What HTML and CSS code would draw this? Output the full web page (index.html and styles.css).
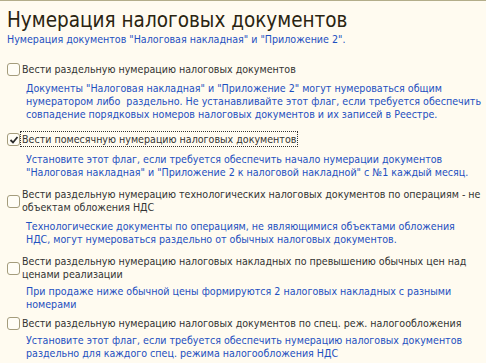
FILE: index.html
```html
<!DOCTYPE html>
<html lang="ru">
<head>
<meta charset="utf-8">
<title>Нумерация налоговых документов</title>
<link rel="stylesheet" href="styles.css">
</head>
<body>
<div class="page">
  <h1 class="title">Нумерация налоговых документов</h1>
  <div class="subtitle">Нумерация документов "Налоговая накладная" и "Приложение 2".</div>

  <div class="option opt1">
    <span class="box"></span>
    <span class="label">Вести раздельную нумерацию налоговых документов</span>
    <div class="desc">Документы "Налоговая накладная" и "Приложение 2" могут нумероваться общим<br>нумератором либо&nbsp; раздельно. Не устанавливайте этот флаг, если требуется обеспечить<br>совпадение порядковых номеров налоговых документов и их записей в Реестре.</div>
  </div>

  <div class="option opt2">
    <span class="box checked"><svg viewBox="0 0 10 10" width="10" height="10"><path d="M1.5 5 L4 7.5 L8.5 2" fill="none" stroke="#2a2a2a" stroke-width="1.8"/></svg></span>
    <span class="label"><span class="focus">Вести помесячную нумерацию налоговых документов</span></span>
    <div class="desc">Установите этот флаг, если требуется обеспечить начало нумерации документов<br>"Налоговая накладная" и "Приложение 2 к налоговой накладной" с №1 каждый месяц.</div>
  </div>

  <div class="option opt3">
    <span class="box"></span>
    <span class="label">Вести раздельную нумерацию технологических налоговых документов по операциям - не<br>объектам обложения НДС</span>
    <div class="desc">Технологические документы по операциям, не являющимися объектами обложения<br>НДС, могут нумероваться раздельно от обычных налоговых документов.</div>
  </div>

  <div class="option opt4">
    <span class="box"></span>
    <span class="label">Вести раздельную нумерацию налоговых накладных по превышению обычных цен над<br>ценами реализации</span>
    <div class="desc">При продаже ниже обычной цены формируются 2 налоговых накладных с разными<br>номерами</div>
  </div>

  <div class="option opt5">
    <span class="box"></span>
    <span class="label">Вести раздельную нумерацию налоговых документов по спец. реж. налогообложения</span>
    <div class="desc">Установите этот флаг, если требуется обеспечить нумерацию налоговых документов<br>раздельно для каждого спец. режима налогообложения НДС</div>
  </div>
</div>
</body>
</html>
```

FILE: styles.css
```css
html, body {
  margin: 0;
  padding: 0;
  background: #fffbf0;
}
body {
  border-top: 1px solid #b3ad8a;
  font-family: "DejaVu Sans", sans-serif;
  font-stretch: condensed;
  font-size: 10.6px;
  color: #333333;
  overflow: hidden;
}
.page {
  padding: 7px 4px 0 7px;
}
.title {
  margin: 0;
  font-weight: normal;
  font-size: 20.5px;
  line-height: 24px;
  color: #2a2410;
}
.subtitle {
  color: #1e50c0;
  line-height: 14px;
  margin-bottom: 17px;
  white-space: nowrap;
}
.option {
  display: grid;
  grid-template-columns: 15px 1fr;
  align-items: center;
}
.box {
  width: 11px;
  height: 11px;
  border: 1px solid #a49c7c;
  border-radius: 3px;
  background: #fffdf6;
  display: flex;
  align-items: center;
  justify-content: center;
}
.label {
  line-height: 13px;
  white-space: nowrap;
}
.focus {
  outline: 1px dotted #333;
  outline-offset: 1px;
}
.desc {
  grid-column: 2;
  padding-left: 4px;
  color: #1e50c0;
  line-height: 13px;
  white-space: nowrap;
}
.opt1 .desc { padding-top: 6px; }
.opt1 { margin-bottom: 12px; }
.opt2 .desc { padding-top: 7px; }
.opt2 { margin-bottom: 9px; }
.opt3 .desc { padding-top: 6px; }
.opt3 { margin-bottom: 9px; }
.opt4 .desc { padding-top: 4px; }
.opt4 { margin-bottom: 6px; }
.opt5 .desc { padding-top: 4px; }
```
